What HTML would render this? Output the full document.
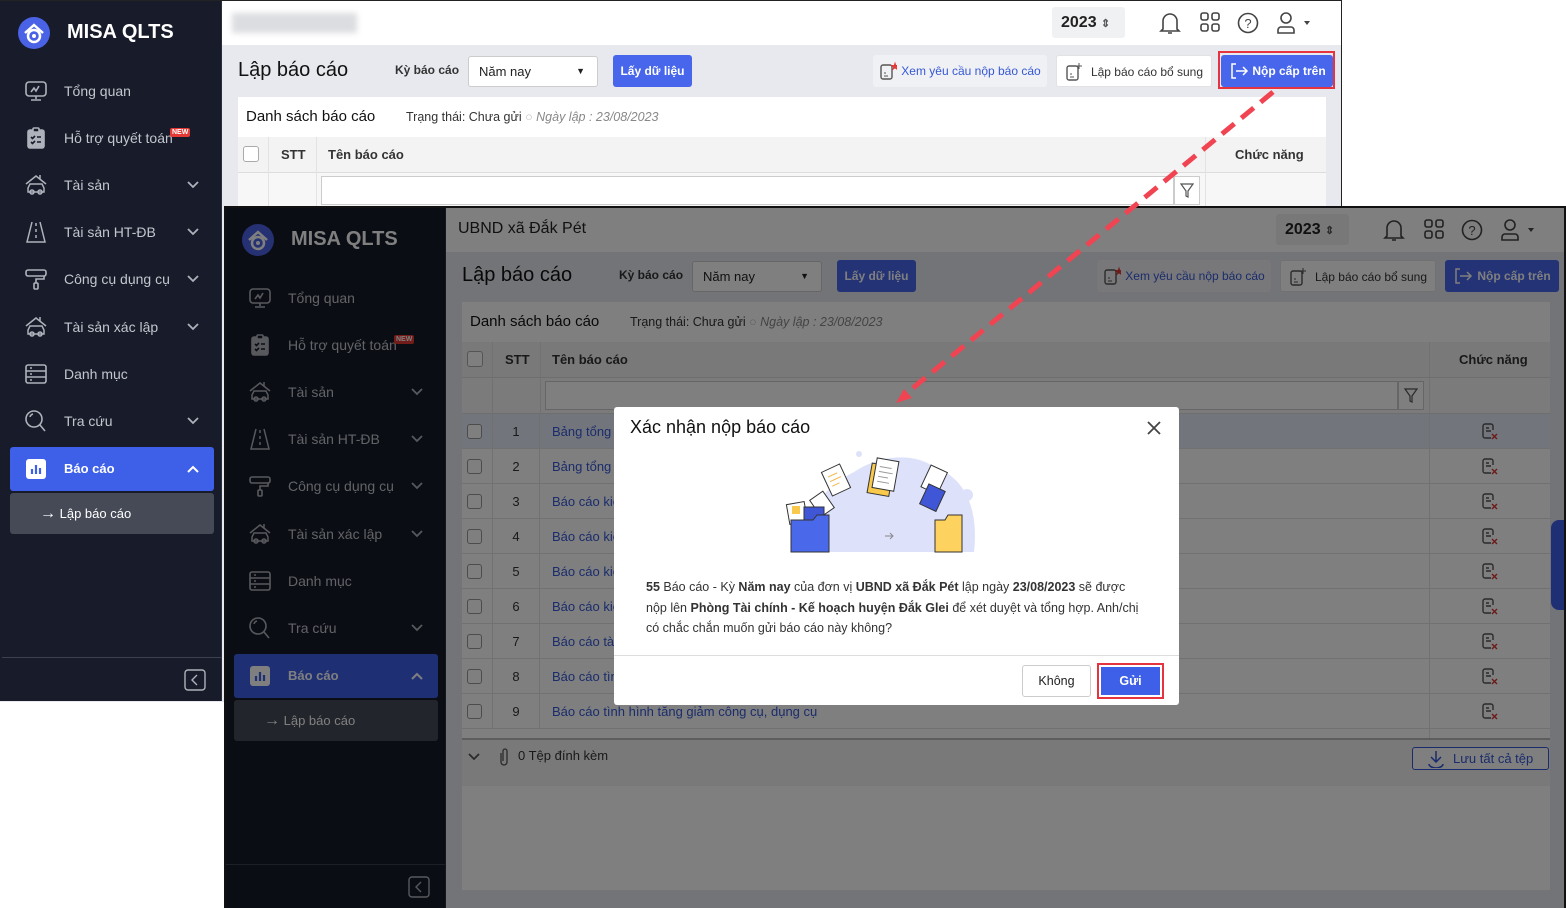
<!DOCTYPE html>
<html><head><meta charset="utf-8">
<style>
*{box-sizing:border-box;margin:0;padding:0}
body{width:1566px;height:908px;position:relative;overflow:hidden;background:#fff;font-family:"Liberation Sans","Noto Sans CJK SC",sans-serif;color:#222}
.frame{position:absolute;width:1342px;height:702px;overflow:hidden;background:#e7e9ee}
.a{position:absolute;white-space:nowrap}
.sb{position:absolute;left:0;top:0;width:222px;height:702px;background:#171b2a;border-right:1px solid #2a2f3d}
.mi{position:absolute;left:0;width:222px;height:40px}
.mi svg.ic{position:absolute;left:24px;top:8px;width:24px;height:24px}
.mi span{position:absolute;left:64px;top:0;line-height:40px;font-size:14px;color:#c3c6cd}
.mi svg.ch{position:absolute;left:186px;top:14px;width:14px;height:12px}
.hd{position:absolute;left:222px;top:0;width:1120px;height:44px;background:#fff}
.btn{position:absolute;height:32px;line-height:32px;font-size:13px;border-radius:3px;text-align:center}
.panel{position:absolute;left:238px;top:96px;width:1088px;height:588px;background:#fff}
.th{position:absolute;top:136px;height:36px;line-height:36px;font-size:13px;font-weight:bold;color:#333}
.row{position:absolute;left:238px;width:1088px;height:35px;border-bottom:1px solid #e3e3e3;font-size:13px;line-height:35px}
.cb{position:absolute;left:5px;top:10px;width:15px;height:15px;border:1px solid #999;border-radius:3px;background:#fff}
.row .n{position:absolute;left:30px;width:48px;text-align:center;color:#333;border-left:1px solid #e3e3e3;border-right:1px solid #e3e3e3;height:35px}
.row .t{position:absolute;left:90px;color:#3558d6}
.row svg{position:absolute;left:1019px;top:8px;width:18px;height:18px}
.vl{position:absolute;background:#e3e3e3;width:1px}
</style></head><body>
<svg width="0" height="0" style="position:absolute">
<defs>
<symbol id="mon" viewBox="0 0 24 24"><g fill="none" stroke="#aeb2bb" stroke-width="1.6"><rect x="2" y="3" width="20" height="14" rx="3"/><path d="M7 13l3-4 2 3 3-5M12 17v3M7 21h10"/></g></symbol>
<symbol id="clip" viewBox="0 0 24 24"><g fill="none" stroke="#aeb2bb" stroke-width="1.6"><rect x="4" y="4" width="16" height="18" rx="2" fill="#aeb2bb"/><rect x="9" y="2" width="6" height="4" rx="1" fill="#171b2a"/><path d="M7 11l1.5 1.5L11 10M13 11h4M7 16l1.5 1.5L11 15M13 16h4" stroke="#171b2a"/></g></symbol>
<symbol id="car" viewBox="0 0 24 24"><g fill="none" stroke="#aeb2bb" stroke-width="1.5"><path d="M2 11l10-8 10 8M16 2v4"/><path d="M4 19v-4l2-4h12l2 4v4z"/><circle cx="8" cy="19" r="2"/><circle cx="16" cy="19" r="2"/></g></symbol>
<symbol id="road" viewBox="0 0 24 24"><g fill="none" stroke="#aeb2bb" stroke-width="1.5"><path d="M8 2L3 22h18L16 2M12 3v3M12 9v3M12 15v3"/></g></symbol>
<symbol id="roll" viewBox="0 0 24 24"><g fill="none" stroke="#aeb2bb" stroke-width="1.6"><rect x="2" y="3" width="20" height="6" rx="2"/><path d="M20 9v3H12v4"/><rect x="10" y="16" width="4" height="6" rx="1"/></g></symbol>
<symbol id="list" viewBox="0 0 24 24"><g fill="none" stroke="#aeb2bb" stroke-width="1.6"><rect x="2" y="3" width="20" height="18" rx="2"/><path d="M2 9h20M2 15h20M6 6h2M6 12h2M6 18h2"/></g></symbol>
<symbol id="srch" viewBox="0 0 24 24"><g fill="none" stroke="#aeb2bb" stroke-width="1.6"><circle cx="10" cy="10" r="8"/><path d="M16 16l5 6M6 8a4 4 0 0 1 3-3"/></g></symbol>
<symbol id="chev" viewBox="0 0 14 12"><path d="M2 3l5 5 5-5" fill="none" stroke="#aeb2bb" stroke-width="1.8"/></symbol>
<symbol id="act" viewBox="0 0 18 18"><g fill="none" stroke-width="1.4"><path d="M12 8V4a2 2 0 0 0-2-2H4a2 2 0 0 0-2 2v10a2 2 0 0 0 2 2h6" stroke="#555"/><path d="M5 6h3M5 9h5" stroke="#555"/><path d="M11 12l5 5M16 12l-5 5" stroke="#d33"/></g></symbol>
</defs></svg>

<!-- ============ FRAME 1 ============ -->
<div class="frame" style="left:0;top:0;border-top:1px solid #222;border-right:1px solid #222;height:702px">
 <div class="sb" style="height:700px">
  <svg class="a" style="left:17px;top:15px" width="34" height="34" viewBox="0 0 34 34"><circle cx="17" cy="17" r="16" fill="#4a63e6"/><path d="M8 17l9-8 9 8" fill="none" stroke="#fff" stroke-width="2.5"/><circle cx="17" cy="20" r="6" fill="none" stroke="#fff" stroke-width="2.5"/><circle cx="17" cy="20" r="2" fill="#fff"/></svg>
  <div class="a" style="left:67px;top:20px;font-size:20px;font-weight:bold;color:#fff">MISA QLTS</div>
  <div class="mi" style="top:70px"><svg class="ic"><use href="#mon"/></svg><span>Tổng quan</span></div>
  <div class="mi" style="top:117px"><svg class="ic"><use href="#clip"/></svg><span>Hỗ trợ quyết toán</span><div class="a" style="left:170px;top:10px;background:#e53935;color:#fff;font-size:7px;font-weight:bold;padding:1px 2px;border-radius:2px">NEW</div></div>
  <div class="mi" style="top:164px"><svg class="ic"><use href="#car"/></svg><span>Tài sản</span><svg class="ch"><use href="#chev"/></svg></div>
  <div class="mi" style="top:211px"><svg class="ic"><use href="#road"/></svg><span>Tài sản HT-ĐB</span><svg class="ch"><use href="#chev"/></svg></div>
  <div class="mi" style="top:258px"><svg class="ic"><use href="#roll"/></svg><span>Công cụ dụng cụ</span><svg class="ch"><use href="#chev"/></svg></div>
  <div class="mi" style="top:306px"><svg class="ic"><use href="#car"/></svg><span>Tài sản xác lập</span><svg class="ch"><use href="#chev"/></svg></div>
  <div class="mi" style="top:353px"><svg class="ic"><use href="#list"/></svg><span>Danh mục</span></div>
  <div class="mi" style="top:400px"><svg class="ic"><use href="#srch"/></svg><span>Tra cứu</span><svg class="ch"><use href="#chev"/></svg></div>
  <div class="a" style="left:10px;top:446px;width:204px;height:44px;background:#3e5fe8;border-radius:3px">
   <svg class="a" style="left:16px;top:12px" width="20" height="20" viewBox="0 0 20 20"><rect width="20" height="20" rx="3" fill="#fff"/><path d="M6 15V10M10 15V6M14 15V9" stroke="#3e5fe8" stroke-width="2.2"/></svg>
   <div class="a" style="left:54px;top:0;line-height:44px;font-size:13px;font-weight:bold;color:#fff">Báo cáo</div>
   <svg class="a" style="left:176px;top:16px" width="14" height="12"><path d="M2 9l5-5 5 5" fill="none" stroke="#fff" stroke-width="2"/></svg>
  </div>
  <div class="a" style="left:10px;top:492px;width:204px;height:41px;background:#454a56;border-radius:3px">
   <div class="a" style="left:30px;top:0;line-height:41px;font-size:13px;color:#fff"><span style="font-size:16px">→</span> Lập báo cáo</div>
  </div>
  <div class="a" style="left:2px;top:656px;width:219px;height:1px;background:#3c4150"></div>
  <svg class="a" style="left:184px;top:668px" width="22" height="22"><rect x="1" y="1" width="20" height="20" rx="3" fill="none" stroke="#aeb2bb" stroke-width="1.4"/><path d="M13 6l-5 5 5 5" fill="none" stroke="#aeb2bb" stroke-width="1.4"/></svg>
 </div>
 <div class="hd">
  <div class="a" style="left:10px;top:12px;width:125px;height:20px;background:#dcdde0;filter:blur(3px)"></div>
  <div class="a" style="left:830px;top:6px;width:73px;height:31px;background:#f0f1f3;border-radius:3px;font-size:16px;font-weight:bold;line-height:31px;padding-left:9px">2023 <span style="font-size:11px;color:#555">⇕</span></div>
  <svg class="a" style="left:937px;top:10px" width="22" height="24" viewBox="0 0 22 24"><path d="M4 18V10a7 7 0 0 1 14 0v8l2 2H2zM9 22h4" fill="none" stroke="#444" stroke-width="1.6"/></svg>
  <svg class="a" style="left:978px;top:11px" width="21" height="21" viewBox="0 0 21 21"><g fill="none" stroke="#444" stroke-width="1.6"><rect x="1" y="1" width="7" height="7" rx="2"/><rect x="12" y="1" width="7" height="7" rx="2"/><rect x="1" y="12" width="7" height="7" rx="2"/><rect x="12" y="12" width="7" height="7" rx="2"/></g></svg>
  <svg class="a" style="left:1015px;top:11px" width="22" height="22" viewBox="0 0 22 22"><circle cx="11" cy="11" r="9.5" fill="none" stroke="#444" stroke-width="1.6"/><text x="11" y="16" font-size="13" text-anchor="middle" fill="#444" font-family="Liberation Sans">?</text></svg>
  <svg class="a" style="left:1054px;top:10px" width="34" height="24" viewBox="0 0 34 24"><g fill="none" stroke="#444" stroke-width="1.6"><circle cx="10" cy="7" r="5"/><path d="M2 22v-3a3 3 0 0 1 3-3h10a3 3 0 0 1 3 3v3z"/></g><path d="M28 10h6l-3 4z" fill="#444"/></svg>
 </div>
 <div class="a" style="left:238px;top:58px;font-size:20px;color:#111">Lập báo cáo</div>
 <div class="a" style="left:395px;top:62px;font-size:12px;font-weight:bold;color:#333">Kỳ báo cáo</div>
 <div class="a" style="left:468px;top:55px;width:130px;height:31px;background:#fff;border:1px solid #ccc;border-radius:3px;font-size:13px;line-height:29px;padding-left:10px">Năm nay<span style="position:absolute;right:12px;font-size:9px">▼</span></div>
 <div class="btn" style="left:613px;top:54px;width:79px;background:#4766ec;color:#fff;font-weight:bold;font-size:12px">Lấy dữ liệu</div>
 <div class="btn" style="left:873px;top:54px;width:174px;background:#f0f1f4;color:#3558d6;font-size:12px;padding-left:22px">Xem yêu cầu nộp báo cáo
  <svg class="a" style="left:6px;top:6px" width="18" height="20"><rect x="2" y="4" width="11" height="14" rx="2" fill="none" stroke="#555" stroke-width="1.4"/><path d="M5 12h2M5 15h4" stroke="#555"/><text x="11" y="9" font-size="10" fill="#e53935">★</text></svg></div>
 <div class="btn" style="left:1056px;top:54px;width:156px;background:#fff;border:1px solid #e2e2e2;font-size:12px;padding-left:26px;color:#333">Lập báo cáo bổ sung
  <svg class="a" style="left:8px;top:6px" width="18" height="20"><rect x="2" y="4" width="11" height="14" rx="2" fill="none" stroke="#555" stroke-width="1.4"/><path d="M5 12h2M5 15h4M14 1v6M11 4h6" stroke="#555"/></svg></div>
 <div class="btn" style="left:1221px;top:54px;width:112px;background:#4766ec;color:#fff;font-weight:bold;font-size:12px;padding-left:24px">Nộp cấp trên
  <svg class="a" style="left:8px;top:7px" width="20" height="18"><path d="M7 2H3v14h4M7 9h11M14 5l4 4-4 4" fill="none" stroke="#fff" stroke-width="1.5"/></svg></div>
 <div class="panel"></div>
 <div class="a" style="left:246px;top:107px;font-size:15px;color:#111">Danh sách báo cáo</div>
 <div class="a" style="left:406px;top:109px;font-size:12.5px;color:#333">Trạng thái: Chưa gửi <span style="color:#bbb">○</span> <i style="color:#888">Ngày lập : 23/08/2023</i></div>
 <div class="a" style="left:238px;top:136px;width:1088px;height:36px;background:#f3f3f3;border-bottom:1px solid #ddd"></div>
 <div class="a" style="left:243px;top:145px;width:16px;height:16px;border:1px solid #aaa;border-radius:3px;background:#fff"></div>
 <div class="th" style="left:281px">STT</div>
 <div class="th" style="left:328px">Tên báo cáo</div>
 <div class="th" style="left:1235px">Chức năng</div>
 <div class="a" style="left:238px;top:172px;width:1088px;height:36px;background:#f7f7f7;border-bottom:1px solid #ddd"></div>
 <div class="a" style="left:321px;top:175px;width:853px;height:29px;background:#fff;border:1px solid #ccc"></div>
 <div class="a" style="left:1174px;top:175px;width:26px;height:29px;background:#fff;border:1px solid #ccc"><svg class="a" style="left:5px;top:6px" width="14" height="15"><path d="M1 1h12L8 8v6l-2-1V8z" fill="none" stroke="#555" stroke-width="1.2"/></svg></div>
 <div class="vl" style="left:268px;top:136px;height:72px"></div><div class="vl" style="left:316px;top:136px;height:72px"></div><div class="vl" style="left:1205px;top:136px;height:72px"></div>
</div>

<!-- ============ FRAME 2 ============ -->
<div class="frame" style="left:224px;top:206px;border:2px solid #111;border-bottom:none">
 <div class="sb" style="left:-2px">
  <svg class="a" style="left:17px;top:15px" width="34" height="34" viewBox="0 0 34 34"><circle cx="17" cy="17" r="16" fill="#4a63e6"/><path d="M8 17l9-8 9 8" fill="none" stroke="#fff" stroke-width="2.5"/><circle cx="17" cy="20" r="6" fill="none" stroke="#fff" stroke-width="2.5"/><circle cx="17" cy="20" r="2" fill="#fff"/></svg>
  <div class="a" style="left:67px;top:20px;font-size:20px;font-weight:bold;color:#fff">MISA QLTS</div>
  <div class="mi" style="top:70px"><svg class="ic"><use href="#mon"/></svg><span>Tổng quan</span></div>
  <div class="mi" style="top:117px"><svg class="ic"><use href="#clip"/></svg><span>Hỗ trợ quyết toán</span><div class="a" style="left:170px;top:10px;background:#e53935;color:#fff;font-size:7px;font-weight:bold;padding:1px 2px;border-radius:2px">NEW</div></div>
  <div class="mi" style="top:164px"><svg class="ic"><use href="#car"/></svg><span>Tài sản</span><svg class="ch"><use href="#chev"/></svg></div>
  <div class="mi" style="top:211px"><svg class="ic"><use href="#road"/></svg><span>Tài sản HT-ĐB</span><svg class="ch"><use href="#chev"/></svg></div>
  <div class="mi" style="top:258px"><svg class="ic"><use href="#roll"/></svg><span>Công cụ dụng cụ</span><svg class="ch"><use href="#chev"/></svg></div>
  <div class="mi" style="top:306px"><svg class="ic"><use href="#car"/></svg><span>Tài sản xác lập</span><svg class="ch"><use href="#chev"/></svg></div>
  <div class="mi" style="top:353px"><svg class="ic"><use href="#list"/></svg><span>Danh mục</span></div>
  <div class="mi" style="top:400px"><svg class="ic"><use href="#srch"/></svg><span>Tra cứu</span><svg class="ch"><use href="#chev"/></svg></div>
  <div class="a" style="left:10px;top:446px;width:204px;height:44px;background:#3e5fe8;border-radius:3px">
   <svg class="a" style="left:16px;top:12px" width="20" height="20" viewBox="0 0 20 20"><rect width="20" height="20" rx="3" fill="#fff"/><path d="M6 15V10M10 15V6M14 15V9" stroke="#3e5fe8" stroke-width="2.2"/></svg>
   <div class="a" style="left:54px;top:0;line-height:44px;font-size:13px;font-weight:bold;color:#fff">Báo cáo</div>
   <svg class="a" style="left:176px;top:16px" width="14" height="12"><path d="M2 9l5-5 5 5" fill="none" stroke="#fff" stroke-width="2"/></svg>
  </div>
  <div class="a" style="left:10px;top:492px;width:204px;height:41px;background:#454a56;border-radius:3px">
   <div class="a" style="left:30px;top:0;line-height:41px;font-size:13px;color:#fff"><span style="font-size:16px">→</span> Lập báo cáo</div>
  </div>
  <div class="a" style="left:2px;top:656px;width:219px;height:1px;background:#3c4150"></div>
  <svg class="a" style="left:184px;top:668px" width="22" height="22"><rect x="1" y="1" width="20" height="20" rx="3" fill="none" stroke="#aeb2bb" stroke-width="1.4"/><path d="M13 6l-5 5 5 5" fill="none" stroke="#aeb2bb" stroke-width="1.4"/></svg>
 </div>
 <div class="hd" style="left:220px">
  <div class="a" style="left:12px;top:12px;font-size:16px;color:#222">UBND xã Đắk Pét</div>
  <div class="a" style="left:830px;top:6px;width:73px;height:31px;background:#f0f1f3;border-radius:3px;font-size:16px;font-weight:bold;line-height:31px;padding-left:9px">2023 <span style="font-size:11px;color:#555">⇕</span></div>
  <svg class="a" style="left:937px;top:10px" width="22" height="24" viewBox="0 0 22 24"><path d="M4 18V10a7 7 0 0 1 14 0v8l2 2H2zM9 22h4" fill="none" stroke="#444" stroke-width="1.6"/></svg>
  <svg class="a" style="left:978px;top:11px" width="21" height="21" viewBox="0 0 21 21"><g fill="none" stroke="#444" stroke-width="1.6"><rect x="1" y="1" width="7" height="7" rx="2"/><rect x="12" y="1" width="7" height="7" rx="2"/><rect x="1" y="12" width="7" height="7" rx="2"/><rect x="12" y="12" width="7" height="7" rx="2"/></g></svg>
  <svg class="a" style="left:1015px;top:11px" width="22" height="22" viewBox="0 0 22 22"><circle cx="11" cy="11" r="9.5" fill="none" stroke="#444" stroke-width="1.6"/><text x="11" y="16" font-size="13" text-anchor="middle" fill="#444" font-family="Liberation Sans">?</text></svg>
  <svg class="a" style="left:1054px;top:10px" width="34" height="24" viewBox="0 0 34 24"><g fill="none" stroke="#444" stroke-width="1.6"><circle cx="10" cy="7" r="5"/><path d="M2 22v-3a3 3 0 0 1 3-3h10a3 3 0 0 1 3 3v3z"/></g><path d="M28 10h6l-3 4z" fill="#444"/></svg>
 </div>
 <div style="position:absolute;left:-2px;top:-2px;width:1342px;height:702px">
 <div class="a" style="left:238px;top:58px;font-size:20px;color:#111">Lập báo cáo</div>
 <div class="a" style="left:395px;top:62px;font-size:12px;font-weight:bold;color:#333">Kỳ báo cáo</div>
 <div class="a" style="left:468px;top:55px;width:130px;height:31px;background:#fff;border:1px solid #ccc;border-radius:3px;font-size:13px;line-height:29px;padding-left:10px">Năm nay<span style="position:absolute;right:12px;font-size:9px">▼</span></div>
 <div class="btn" style="left:613px;top:54px;width:79px;background:#4766ec;color:#fff;font-weight:bold;font-size:12px">Lấy dữ liệu</div>
 <div class="btn" style="left:873px;top:54px;width:174px;background:#f0f1f4;color:#3558d6;font-size:12px;padding-left:22px">Xem yêu cầu nộp báo cáo
  <svg class="a" style="left:6px;top:6px" width="18" height="20"><rect x="2" y="4" width="11" height="14" rx="2" fill="none" stroke="#555" stroke-width="1.4"/><path d="M5 12h2M5 15h4" stroke="#555"/><text x="11" y="9" font-size="10" fill="#e53935">★</text></svg></div>
 <div class="btn" style="left:1056px;top:54px;width:156px;background:#fff;border:1px solid #e2e2e2;font-size:12px;padding-left:26px;color:#333">Lập báo cáo bổ sung
  <svg class="a" style="left:8px;top:6px" width="18" height="20"><rect x="2" y="4" width="11" height="14" rx="2" fill="none" stroke="#555" stroke-width="1.4"/><path d="M5 12h2M5 15h4M14 1v6M11 4h6" stroke="#555"/></svg></div>
 <div class="btn" style="left:1221px;top:54px;width:114px;background:#4766ec;color:#fff;font-weight:bold;font-size:12px;padding-left:24px">Nộp cấp trên
  <svg class="a" style="left:8px;top:7px" width="20" height="18"><path d="M7 2H3v14h4M7 9h11M14 5l4 4-4 4" fill="none" stroke="#fff" stroke-width="1.5"/></svg></div>
 <div class="panel"></div>
 <div class="a" style="left:246px;top:107px;font-size:15px;color:#111">Danh sách báo cáo</div>
 <div class="a" style="left:406px;top:109px;font-size:12.5px;color:#333">Trạng thái: Chưa gửi <span style="color:#bbb">○</span> <i style="color:#888">Ngày lập : 23/08/2023</i></div>
 <div class="a" style="left:238px;top:136px;width:1088px;height:36px;background:#f3f3f3;border-bottom:1px solid #ddd"></div>
 <div class="a" style="left:243px;top:145px;width:16px;height:16px;border:1px solid #aaa;border-radius:3px;background:#fff"></div>
 <div class="th" style="left:281px">STT</div>
 <div class="th" style="left:328px">Tên báo cáo</div>
 <div class="th" style="left:1235px">Chức năng</div>
 <div class="a" style="left:238px;top:172px;width:1088px;height:36px;background:#f7f7f7;border-bottom:1px solid #ddd"></div>
 <div class="a" style="left:321px;top:175px;width:853px;height:29px;background:#fff;border:1px solid #ccc"></div>
 <div class="a" style="left:1174px;top:175px;width:26px;height:29px;background:#fff;border:1px solid #ccc"><svg class="a" style="left:5px;top:6px" width="14" height="15"><path d="M1 1h12L8 8v6l-2-1V8z" fill="none" stroke="#555" stroke-width="1.2"/></svg></div>
 <div class="vl" style="left:268px;top:136px;height:72px"></div><div class="vl" style="left:316px;top:136px;height:72px"></div><div class="vl" style="left:1205px;top:136px;height:72px"></div>
 <div class="row" style="top:208px;background:#e6ebf8"><div class="cb"></div><div class="n">1</div><div class="t">Bảng tổng hợp tình hình tăng giảm tài sản cố định</div><svg><use href="#act"/></svg></div>
 <div class="row" style="top:243px"><div class="cb"></div><div class="n">2</div><div class="t">Bảng tổng hợp hiện trạng sử dụng tài sản</div><svg><use href="#act"/></svg></div>
 <div class="row" style="top:278px"><div class="cb"></div><div class="n">3</div><div class="t">Báo cáo kiểm kê tài sản cố định</div><svg><use href="#act"/></svg></div>
 <div class="row" style="top:313px"><div class="cb"></div><div class="n">4</div><div class="t">Báo cáo kiểm kê công cụ dụng cụ</div><svg><use href="#act"/></svg></div>
 <div class="row" style="top:348px"><div class="cb"></div><div class="n">5</div><div class="t">Báo cáo kiểm kê tài sản hạ tầng</div><svg><use href="#act"/></svg></div>
 <div class="row" style="top:383px"><div class="cb"></div><div class="n">6</div><div class="t">Báo cáo kiểm kê nhà đất</div><svg><use href="#act"/></svg></div>
 <div class="row" style="top:418px"><div class="cb"></div><div class="n">7</div><div class="t">Báo cáo tài sản cố định</div><svg><use href="#act"/></svg></div>
 <div class="row" style="top:453px"><div class="cb"></div><div class="n">8</div><div class="t">Báo cáo tình hình sử dụng tài sản</div><svg><use href="#act"/></svg></div>
 <div class="row" style="top:488px"><div class="cb"></div><div class="n">9</div><div class="t">Báo cáo tình hình tăng giảm công cụ, dụng cụ</div><svg><use href="#act"/></svg></div>
 <div class="vl" style="left:1205px;top:208px;height:325px"></div>
 <div class="a" style="left:238px;top:532px;width:1088px;height:2px;background:#bbb"></div>
 <div class="a" style="left:238px;top:534px;width:1088px;height:46px;background:#f3f3f3"></div>
 <svg class="a" style="left:243px;top:545px" width="14" height="12"><path d="M2 3l5 5 5-5" fill="none" stroke="#555" stroke-width="1.8"/></svg>
 <svg class="a" style="left:274px;top:541px" width="12" height="20"><path d="M3 6v9a3 3 0 0 0 6 0V4a2 2 0 0 0-4 0v10" fill="none" stroke="#555" stroke-width="1.3"/></svg>
 <div class="a" style="left:294px;top:542px;font-size:13px;color:#333">0 Tệp đính kèm</div>
 <div class="a" style="left:1188px;top:541px;width:137px;height:23px;border:1px solid #3558d6;border-radius:3px;background:#fff;color:#3558d6;font-size:13px;line-height:21px;padding-left:40px">Lưu tất cả tệp
  <svg class="a" style="left:14px;top:2px" width="18" height="18"><path d="M9 1v11M4 7l5 5 5-5M2 14a7 4 0 0 0 14 0" fill="none" stroke="#3558d6" stroke-width="1.5"/></svg></div>
 <div class="a" style="left:1327px;top:314px;width:16px;height:90px;background:#3e5fe8;border-radius:8px 0 0 8px"></div>
 </div>
 <div class="a" style="left:-2px;top:-2px;width:1344px;height:704px;background:rgba(0,0,0,0.5)"></div>
</div>

<!-- MODAL -->
<div class="a" style="left:614px;top:407px;width:565px;height:298px;background:#fff;border-radius:3px">
 <div class="a" style="left:16px;top:10px;font-size:18px;color:#111">Xác nhận nộp báo cáo</div>
 <svg class="a" style="left:532px;top:13px" width="16" height="16"><path d="M2 2l12 12M14 2L2 14" stroke="#444" stroke-width="1.8"/></svg>
 <svg class="a" style="left:170px;top:40px" width="210" height="110" viewBox="0 0 210 110">
  <path d="M20 105C15 70 40 40 70 25C95 8 130 5 150 20C180 30 195 60 190 105Z" fill="#dde2fa"/>
  <circle cx="75" cy="7" r="3" fill="#dde2fa"/><circle cx="124" cy="16" r="2" fill="#dde2fa"/><circle cx="183" cy="48" r="6" fill="#dde2fa"/>
  <g transform="rotate(-25 52 33)"><rect x="42" y="20" width="20" height="26" fill="#fff" stroke="#333"/><path d="M46 27h10M46 32h12M46 37h8" stroke="#f3b84b"/></g>
  <g transform="rotate(10 98 30)"><rect x="86" y="18" width="22" height="30" fill="#f8c94a" stroke="#333"/><rect x="90" y="12" width="22" height="30" fill="#fff" stroke="#333"/><path d="M94 20h12M94 25h14M94 30h10M94 35h12" stroke="#999"/></g>
  <g transform="rotate(25 148 35)"><rect x="140" y="20" width="18" height="24" fill="#fff" stroke="#333"/><rect x="146" y="38" width="18" height="22" fill="#3f56d7" stroke="#333"/></g>
  <rect x="4" y="56" width="18" height="20" fill="#fff" stroke="#333" transform="rotate(-10 13 66)"/><rect x="8" y="59" width="8" height="8" fill="#f8c94a"/>
  <rect x="30" y="47" width="16" height="20" fill="#fff" stroke="#333" transform="rotate(-35 38 57)"/>
  <rect x="20" y="60" width="20" height="16" fill="#3f56d7" stroke="#333"/>
  <path d="M7 73h22l4-5h12v37H7z" fill="#4a68ea" stroke="#333"/>
  <path d="M151 73h10l3-5h14v37h-27z" fill="#fdd25f" stroke="#333"/>
  <path d="M101 89h8M106 86l3 3-3 3" fill="none" stroke="#888" stroke-width="1"/>
 </svg>
 <div class="a" style="left:32px;top:170px;width:496px;white-space:normal;font-size:12.5px;line-height:20.5px;color:#333"><b>55</b> Báo cáo - Kỳ <b>Năm nay</b> của đơn vị <b>UBND xã Đắk Pét</b> lập ngày <b>23/08/2023</b> sẽ được nộp lên <b>Phòng Tài chính - Kế hoạch huyện Đắk Glei</b> để xét duyệt và tổng hợp. Anh/chị có chắc chắn muốn gửi báo cáo này không?</div>
 <div class="a" style="left:0;top:248px;width:565px;height:1px;background:#ddd"></div>
 <div class="a" style="left:408px;top:258px;width:69px;height:32px;border:1px solid #ccc;border-radius:3px;text-align:center;line-height:30px;font-size:12.5px">Không</div>
 <div class="a" style="left:483px;top:256px;width:67px;height:36px;border:2px solid #e53340;padding:2px"><div style="background:#3e5fe8;height:100%;color:#fff;font-size:12.5px;font-weight:bold;text-align:center;line-height:28px">Gửi</div></div>
</div>

<!-- red box and arrow -->
<div class="a" style="left:1218px;top:51px;width:117px;height:38px;border:2px solid #e53340"></div>
<svg class="a" style="left:0;top:0" width="1566" height="908">
 <path d="M1273 92L908 392" stroke="#f04452" stroke-width="5" stroke-dasharray="16 9" fill="none"/>
 <path d="M896 403l16-5-8-9z" fill="#f04452"/>
</svg>
</body></html>
